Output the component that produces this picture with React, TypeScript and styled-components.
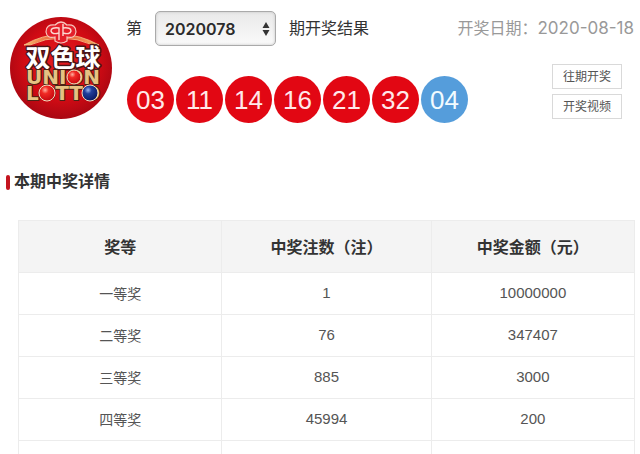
import React from "react";
import styled, { createGlobalStyle } from "styled-components";

const GlobalStyle = createGlobalStyle`
  *, *::before, *::after { box-sizing: border-box; }
  body {
    margin: 0;
    background: #fff;
    color: #333;
    font-family: "Liberation Sans", "Noto Sans CJK SC", sans-serif;
    font-size: 16px;
  }
`;

const Page = styled.main`
  height: 100vh;
  overflow: hidden;
`;

const Header = styled.header`
  display: flex;
  gap: 13px;
  padding: 11px 6px 0 9px;
`;

const Logo = styled.svg`
  flex: none;
  width: 104px;
  height: 104px;
  margin-top: 5px;
`;

const Draw = styled.div`
  flex: 1;
`;

const TopLine = styled.div`
  display: flex;
  align-items: center;
  justify-content: space-between;
  height: 35px;
`;

const Issue = styled.label`
  display: flex;
  align-items: center;
  gap: 13px;
  line-height: 20px;
`;

const SelectBox = styled.span`
  display: grid;
  align-items: center;
  width: 121px;
`;

const IssueSelect = styled.select`
  grid-area: 1 / 1;
  appearance: none;
  width: 100%;
  height: 35px;
  padding: 0 24px 0 9px;
  border: 1px solid #aaa;
  border-radius: 5px;
  background: linear-gradient(#e9e9e9, #fafafa);
  box-shadow: inset 0 0 3px #c4c4c4;
  color: #2b2b2b;
  font-family: Inter, sans-serif;
  font-size: 16px;
  font-weight: 600;
`;

const Arrows = styled.svg`
  grid-area: 1 / 1;
  justify-self: end;
  width: 8px;
  height: 16px;
  margin-right: 6px;
  pointer-events: none;
`;

const DrawDate = styled.p`
  margin: 0;
  color: #999;
  line-height: 20px;
`;

const DateValue = styled.time`
  font-family: Inter, sans-serif;
  font-size: 17px;
`;

const ResultLine = styled.div`
  display: flex;
  align-items: flex-start;
  justify-content: space-between;
  margin-top: 18px;
  padding: 0 12px 0 1px;
`;

const Balls = styled.ol`
  display: flex;
  gap: 2px;
  margin: 12px 0 0;
  padding: 0;
  list-style: none;
`;

const Ball = styled.li<{ $blue?: boolean }>`
  display: flex;
  align-items: center;
  justify-content: center;
  width: 47px;
  height: 47px;
  padding-top: 2px;
  border-radius: 50%;
  background: ${(p) => (p.$blue ? "#559ddb" : "#e20713")};
  color: ${(p) => (p.$blue ? "#f2fbff" : "#ffe9ea")};
  font-size: 26px;
`;

const Actions = styled.div`
  display: grid;
  gap: 5px;
`;

const ActionButton = styled.button`
  width: 70px;
  height: 25px;
  padding: 0 0 2px;
  border: 1px solid #d9d9d9;
  background: #fff;
  color: #555;
  font-family: "Noto Sans CJK SC", sans-serif;
  font-size: 12px;
  line-height: 20px;
`;

const SectionTitle = styled.h2`
  display: flex;
  align-items: center;
  gap: 4px;
  margin: 47px 6px 0;
  font-size: 16px;
  line-height: 24px;

  &::before {
    content: "";
    width: 4px;
    height: 15px;
    border-radius: 2px;
    background: #c4141f;
  }
`;

const TableArea = styled.section`
  padding: 26px 5px 0 18px;
`;

const Prizes = styled.table`
  width: 100%;
  table-layout: fixed;
  border-collapse: collapse;
  text-align: center;

  th, td {
    padding: 0 0 2px;
    border: 1px solid #ececec;
  }

  th {
    height: 52px;
    background: #f4f4f4;
    font-size: 16px;
  }

  th:nth-child(2) { width: 34%; }

  td {
    height: 42px;
    color: #555;
    font-size: 15px;
  }

  td:first-child { font-size: 14px; }
`;

const reds = ["03", "11", "14", "16", "21", "32"];

const rows = [
  ["一等奖", "1", "10000000"],
  ["二等奖", "76", "347407"],
  ["三等奖", "885", "3000"],
  ["四等奖", "45994", "200"],
  ["五等奖", "", ""],
];

function UnionLottoLogo() {
  return (
    <Logo viewBox="0 0 104 104" role="img" aria-label="双色球 UNION LOTTO">
      <defs>
        <radialGradient id="disc" cx="50%" cy="45%" r="55%">
          <stop offset="0" stopColor="#e51a20" />
          <stop offset="0.65" stopColor="#d10b14" />
          <stop offset="1" stopColor="#a90712" />
        </radialGradient>
        <radialGradient id="redBall" cx="38%" cy="32%" r="65%">
          <stop offset="0" stopColor="#ffb0a0" />
          <stop offset="0.35" stopColor="#f02a24" />
          <stop offset="1" stopColor="#c90b12" />
        </radialGradient>
        <radialGradient id="blueBall" cx="38%" cy="32%" r="65%">
          <stop offset="0" stopColor="#9cb4ee" />
          <stop offset="0.35" stopColor="#213f9c" />
          <stop offset="1" stopColor="#0b1c66" />
        </radialGradient>
        <linearGradient id="arch" x1="0" x2="1">
          <stop offset="0" stopColor="#f6b76a" />
          <stop offset="0.5" stopColor="#e84a2d" />
          <stop offset="1" stopColor="#f6b76a" />
        </linearGradient>
      </defs>
      <circle cx="52" cy="52" r="51" fill="url(#disc)" />
      <path d="M15 29Q52 8 90 29L84 29Q52 15 21 29Z" fill="url(#arch)" stroke="#f8c98d" strokeWidth="0.8" />
      <path
        d="M46 9Q52 3 58 9Q67 8 67 16Q66 23 58 21L58 25Q52 29 46 25L46 21Q38 23 37 16Q37 8 46 9Z"
        fill="#e4202a"
        stroke="#f7c9c0"
        strokeWidth="1.2"
      />
      <path
        d="M50 24V12Q42 11 42 15Q43 19 50 17M54 8V20M54 12Q62 11 62 15Q61 19 54 17"
        fill="none"
        stroke="#fbd9d2"
        strokeWidth="1.4"
      />
      <text
        x="54"
        y="51"
        fontFamily="Noto Sans CJK SC, sans-serif"
        fontWeight="700"
        fontSize="25"
        textAnchor="middle"
        fill="#fff"
        stroke="#4a1518"
        strokeWidth="3"
        strokeLinejoin="round"
        paintOrder="stroke"
      >
        双色球
      </text>
      <g
        fontFamily="DejaVu Sans, sans-serif"
        fontWeight="700"
        fontSize="20"
        fill="#e6c283"
        stroke="#4a2315"
        strokeWidth="2"
        strokeLinejoin="round"
        paintOrder="stroke"
        textAnchor="middle"
      >
        <text x="54" y="68">UNION</text>
        <text x="54" y="84">LOTTO</text>
      </g>
      <circle cx="65" cy="61" r="7" fill="url(#redBall)" stroke="#f4dfc0" />
      <circle cx="38" cy="77" r="8" fill="url(#redBall)" stroke="#f4dfc0" />
      <circle cx="81" cy="77" r="8" fill="url(#blueBall)" stroke="#f4dfc0" />
    </Logo>
  );
}

export default function App() {
  return (
    <>
      <GlobalStyle />
      <Page>
        <Header>
          <UnionLottoLogo />
          <Draw>
            <TopLine>
              <Issue>
                第
                <SelectBox>
                  <IssueSelect defaultValue="2020078">
                    <option>2020078</option>
                  </IssueSelect>
                  <Arrows viewBox="0 0 8 16" aria-hidden="true">
                    <path d="M4 1L7.5 7H.5ZM4 15L.5 9H7.5Z" fill="#333" />
                  </Arrows>
                </SelectBox>
                期开奖结果
              </Issue>
              <DrawDate>
                开奖日期：<DateValue dateTime="2020-08-18">2020-08-18</DateValue>
              </DrawDate>
            </TopLine>
            <ResultLine>
              <Balls>
                {reds.map((n) => (
                  <Ball key={n}>{n}</Ball>
                ))}
                <Ball $blue>04</Ball>
              </Balls>
              <Actions>
                <ActionButton type="button">往期开奖</ActionButton>
                <ActionButton type="button">开奖视频</ActionButton>
              </Actions>
            </ResultLine>
          </Draw>
        </Header>
        <SectionTitle>本期中奖详情</SectionTitle>
        <TableArea>
          <Prizes>
            <thead>
              <tr>
                <th scope="col">奖等</th>
                <th scope="col">中奖注数（注）</th>
                <th scope="col">中奖金额（元）</th>
              </tr>
            </thead>
            <tbody>
              {rows.map(([level, count, amount]) => (
                <tr key={level}>
                  <td>{level}</td>
                  <td>{count}</td>
                  <td>{amount}</td>
                </tr>
              ))}
            </tbody>
          </Prizes>
        </TableArea>
      </Page>
    </>
  );
}
